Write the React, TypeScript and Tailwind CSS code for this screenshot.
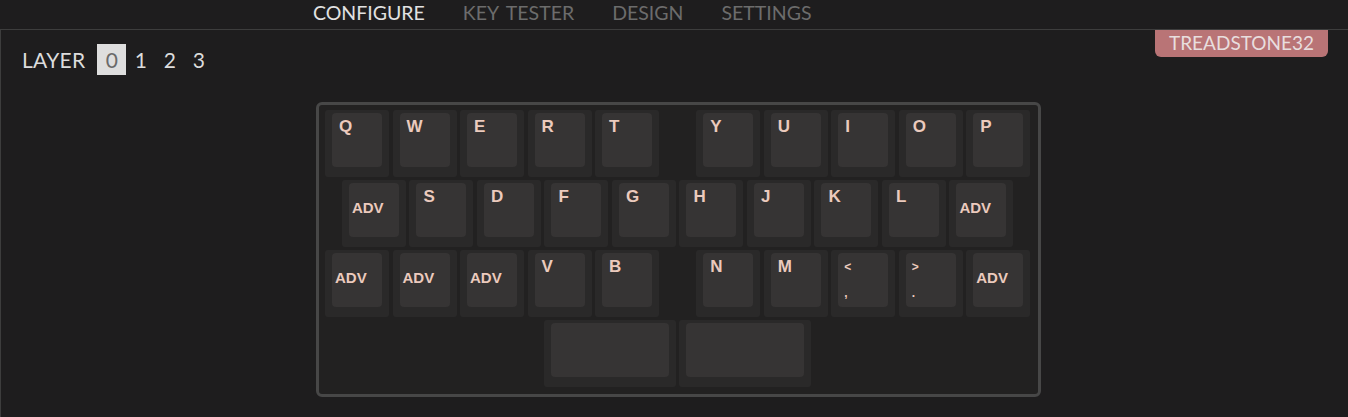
import React from "react";

type Key = { label?: string; sub?: string; w?: number; gap?: string };

const ui = { fontFamily: "Lato, 'Noto Sans', sans-serif" };
const keyFont = { fontFamily: "'Liberation Sans', Arial, sans-serif" };

const rows: { pad?: string; keys: Key[] }[] = [
  {
    keys: [
      { label: "Q" },
      { label: "W" },
      { label: "E" },
      { label: "R" },
      { label: "T" },
      { label: "Y", gap: "w-[33.75px]" },
      { label: "U" },
      { label: "I" },
      { label: "O" },
      { label: "P" },
    ],
  },
  {
    pad: "w-[16.875px]",
    keys: [
      { label: "ADV" },
      { label: "S" },
      { label: "D" },
      { label: "F" },
      { label: "G" },
      { label: "H" },
      { label: "J" },
      { label: "K" },
      { label: "L" },
      { label: "ADV" },
    ],
  },
  {
    keys: [
      { label: "ADV" },
      { label: "ADV" },
      { label: "ADV" },
      { label: "V" },
      { label: "B" },
      { label: "N", gap: "w-[33.75px]" },
      { label: "M" },
      { label: "<", sub: "," },
      { label: ">", sub: "." },
      { label: "ADV" },
    ],
  },
  {
    pad: "w-[219.375px]",
    keys: [{ w: 2 }, { w: 2 }],
  },
];

function KeyCap({ k }: { k: Key }) {
  const wide = k.w === 2;
  return (
    <div className={wide ? "w-[135px] shrink-0" : "w-[67.5px] shrink-0"}>
      <div
        className={`${wide ? "w-[132px]" : "w-[64px]"} h-[67px] rounded-[3px] bg-[#2a2929] px-[7px] pt-[3px]`}
      >
        <div
          className="relative h-[54px] rounded-[4px] bg-[#363434] text-[#ebcabd] font-bold"
          style={keyFont}
        >
          {k.label === "ADV" ? (
            <div className="flex h-full items-center pl-[3px] pb-[6px] text-[15px] leading-none">
              ADV
            </div>
          ) : k.sub ? (
            <div className="flex h-full flex-col justify-between pl-[6px] pt-[8px] pb-[8px] text-[12px] leading-none">
              <span>{k.label}</span>
              <span>{k.sub}</span>
            </div>
          ) : k.label ? (
            <div className="pl-[7px] pt-[5px] text-[17px] leading-none">{k.label}</div>
          ) : null}
        </div>
      </div>
    </div>
  );
}

export default function App() {
  return (
    <div className="h-[417px] w-[1348px] overflow-hidden bg-[#1e1d1e]" style={ui}>
      <nav className="flex h-[30px] items-start gap-[38px] border-b border-[#3d3d3d] pl-[313px] pt-[1px] text-[19.5px] leading-[24px] [word-spacing:3px]">
        <span className="text-[#e2e2e2]">CONFIGURE</span>
        <span className="text-[#6c6c6c]">KEY TESTER</span>
        <span className="text-[#6c6c6c]">DESIGN</span>
        <span className="text-[#6c6c6c]">SETTINGS</span>
      </nav>

      <div className="h-full border-l border-[#3d3d3d]">
        <div className="flex h-[45px] items-start justify-between">
          <div className="flex h-[31px] items-center pl-[21px] mt-[14px] text-[21px] leading-[31px] text-[#dcdcdc]">
            <span className="mr-[12px] tracking-[0.3px]">LAYER</span>
            <span className="flex h-[31px] w-[29px] items-center justify-center bg-[#dedede] text-[#6a6a6a]">
              0
            </span>
            <span className="flex h-[31px] w-[29px] items-center justify-center">1</span>
            <span className="flex h-[31px] w-[29px] items-center justify-center">2</span>
            <span className="flex h-[31px] w-[29px] items-center justify-center">3</span>
          </div>
          <div className="mr-[20px] flex h-[27px] w-[173px] items-center justify-center rounded-b-[6px] bg-[#b97476] text-[19px] text-[#e8dede]">
            TREADSTONE32
          </div>
        </div>

        <div className="ml-[315px] mt-[27px] h-[295px] w-[725px] rounded-[6px] border-[3px] border-[#474747] bg-[#222121] pl-[6px] pt-[5px]">
          {rows.map((row, i) => (
            <div key={i} className="flex h-[70px]">
              {row.pad && <div className={`${row.pad} shrink-0`} />}
              {row.keys.map((k, j) => (
                <React.Fragment key={j}>
                  {k.gap && <div className={`${k.gap} shrink-0`} />}
                  <KeyCap k={k} />
                </React.Fragment>
              ))}
            </div>
          ))}
        </div>
      </div>
    </div>
  );
}
